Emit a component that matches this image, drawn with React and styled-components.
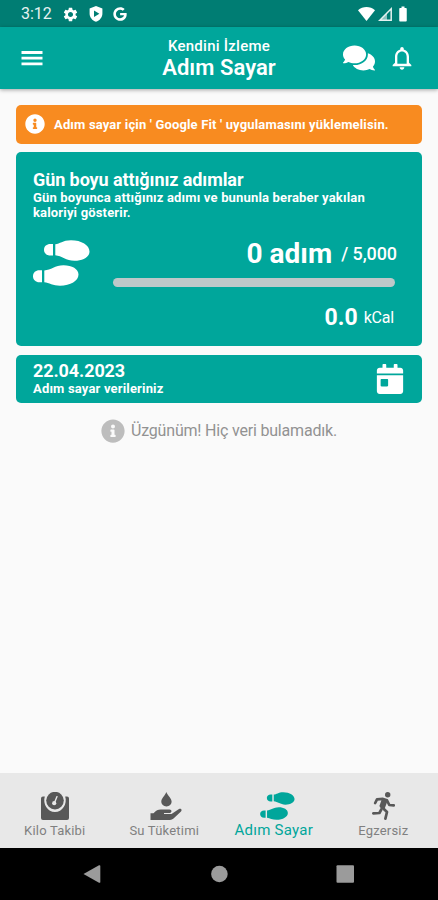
import React from 'react';
import styled, { createGlobalStyle } from 'styled-components';
import { FaCalendarDay, FaComments, FaGoogle, FaInfoCircle } from 'react-icons/fa';
import { MdBatteryFull, MdNotificationsNone, MdSettings } from 'react-icons/md';

const teal = '#00a69b';
const darkTeal = '#007d73';

const GlobalStyle = createGlobalStyle`
  body {
    margin: 0;
    background: #fafafa;
    font-family: Roboto, 'Noto Sans', sans-serif;
  }

  svg {
    display: block;
    flex: none;
  }
`;

const Screen = styled.div`
  display: flex;
  flex-direction: column;
  height: 900px;
  overflow: hidden;
`;

const Text = styled.div`
  font-size: ${p => p.$size}px;
  font-weight: ${p => p.$weight || 400};
  line-height: ${p => p.$line || p.$size}px;
  letter-spacing: ${p => p.$track || 0}px;
  white-space: nowrap;
`;

const StatusBar = styled.div`
  display: flex;
  flex: none;
  justify-content: space-between;
  align-items: center;
  box-sizing: border-box;
  height: 27px;
  padding: 1px 26px 0 21px;
  background: ${darkTeal};
  color: #fff;
`;

const StatusGroup = styled.div`
  display: flex;
  align-items: center;
  gap: ${p => p.$gap}px;
`;

const Clock = styled(Text)`
  width: 31px;
  opacity: 0.9;
`;

const Header = styled.div`
  display: grid;
  flex: none;
  grid-template-columns: 76px 1fr 76px;
  align-items: center;
  box-sizing: border-box;
  height: 62px;
  padding: 0 18px;
  background: ${teal};
  color: #fff;
  box-shadow: 0 1px 4px rgba(0, 0, 0, 0.35);
`;

const Titles = styled.div`
  display: flex;
  flex-direction: column;
  align-items: center;
  padding-top: 2px;
`;

const HeaderActions = styled.div`
  display: flex;
  justify-content: flex-end;
  align-items: center;
  gap: 13px;
  padding-right: 4px;
`;

const Content = styled.div`
  display: flex;
  flex: 1;
  flex-direction: column;
  padding: 16px 16px 0;
`;

const Banner = styled.div`
  display: flex;
  align-items: center;
  box-sizing: border-box;
  height: 38.5px;
  gap: 9px;
  padding-left: 9px;
  border-radius: 5px;
  background: #f88b20;
  color: #fff;
`;

const Card = styled.div`
  box-sizing: border-box;
  border-radius: 5px;
  background: ${teal};
  color: #fff;
`;

const StepsCard = styled(Card)`
  height: 194px;
  margin-top: 8px;
  padding: 18px 17px 0;
`;

const Progress = styled.div`
  display: flex;
  justify-content: space-between;
  margin-top: 16px;

  > svg {
    margin-top: 3px;
  }
`;

const Stats = styled.div`
  display: flex;
  flex-direction: column;
  align-items: flex-end;
  width: 282px;
  margin-right: 10px;
`;

const StatLine = styled.div`
  display: flex;
  align-items: center;
  gap: ${p => p.$gap}px;
  margin-right: ${p => p.$shift || 0}px;
`;

const Track = styled.div`
  width: 100%;
  height: 9px;
  margin: 7px 0 17px;
  border-radius: 5px;
  background: #bec8c9;
`;

const DateCard = styled(Card)`
  display: flex;
  justify-content: space-between;
  align-items: center;
  height: 48px;
  margin-top: 9px;
  padding: 0 17px;
`;

const Empty = styled.div`
  display: flex;
  justify-content: center;
  align-items: center;
  gap: 6px;
  margin-top: 16px;
  color: #929292;

  svg {
    color: #bdbdbd;
  }
`;

const TabBar = styled.div`
  display: grid;
  flex: none;
  grid-template-columns: repeat(4, 1fr);
  height: 75px;
  background: #e8e8e8;
`;

const Tab = styled.div`
  display: flex;
  flex-direction: column;
  align-items: center;
  padding-top: 19px;
  color: ${p => (p.$active ? teal : '#808080')};

  svg {
    height: 28px;
    margin-left: ${p => (p.$active ? 7 : 0)}px;
    color: ${p => (p.$active ? teal : '#585858')};
  }
`;

const SystemBar = styled.div`
  display: flex;
  flex: none;
  justify-content: center;
  height: 52px;
  background: #000;
`;

const MenuIcon = () => (
  <svg width="28" height="28" viewBox="0 0 28 28" stroke="#fff" strokeWidth="2.8">
    <path d="M3.5 8.5H24.5M3.5 14.2H24.5M3.5 19.9H24.5" />
  </svg>
);

const ShieldIcon = () => (
  <svg width="14" height="16" viewBox="0 0 14 16">
    <path
      fill="#fff"
      fillRule="evenodd"
      d="M7 0 13.4 2.4V7.5C13.4 11.3 10.7 14.6 7 15.8 3.3 14.6.6 11.3.6 7.5V2.4ZM5 4.5V11L10.4 7.7Z"
    />
  </svg>
);

const WifiIcon = () => (
  <svg width="17" height="14" viewBox="0 0 17 14">
    <path fill="#fff" d="M0 3.2C4.8-1 12.2-1 17 3.2L8.5 14Z" />
  </svg>
);

const SignalIcon = () => (
  <svg width="14" height="14" viewBox="0 0 14 14">
    <path fill="none" stroke="#e6f2f1" strokeWidth="1.5" d="M1.8 13.2 13.2 1.8V13.2Z" />
    <path fill="#e6f2f1" d="M2 13 9 6V13Z" opacity=".6" />
  </svg>
);

const FootprintsIcon = ({ width = 57, height = 46 }) => (
  <svg width={width} height={height} viewBox="0 0 57 46" fill="currentColor">
    <path d="M20 4V15.5H17.3C13.7 15.5 11 13.2 11 9.7S13.7 4 17.3 4Z" />
    <path d="M22.3 4.2C27 4 29.5.3 38 .3 48.5.3 56.5 5.2 56.5 11.5 56.5 17 50 20.8 41.5 20.8 33 20.8 29 15.8 22.3 15.3Z" />
    <path d="M9 30.3V42.2H6.3C2.7 42.2 0 39.8 0 36.2S2.7 30.3 6.3 30.3Z" />
    <path d="M11.3 30.4C18 30 22 25.2 30.5 25.2 39 25.2 45.5 29 45.5 34.5 45.5 40.8 37.5 45.7 27 45.7 20 45.7 16 42.6 11.3 42.2Z" />
  </svg>
);

const ScaleIcon = () => (
  <svg width="28" height="28" viewBox="0 0 28 28">
    <path
      fill="currentColor"
      d="M2 4.5H3.8C1.5 12 6.5 20 14 20S26.5 12 24.2 4.5H26Q28 4.5 28 6.5V26Q28 28 26 28H2Q0 28 0 26V6.5Q0 4.5 2 4.5Z"
    />
    <circle cx="14" cy="8.6" r="8.8" fill="currentColor" />
    <path d="M16 4.6 13.4 11" stroke="#e8e8e8" strokeWidth="1.4" strokeLinecap="round" />
    <circle cx="13.2" cy="11.2" r="2.1" fill="#e8e8e8" />
  </svg>
);

const WaterIcon = () => (
  <svg width="36" height="28" viewBox="0 0 36 28" fill="currentColor">
    <path d="M20.3 0C22 4 25.6 6.4 25.6 9.6 25.6 12.5 23.4 14.4 20.5 14.4S15.3 12.5 15.3 9.6C15.3 6.4 18.8 4 20.3 0Z" />
    <path d="M4.5 21.3H7.5C10 18.3 12 17.5 14.7 17.5H23.5C25.9 17.5 26.2 20.5 23.8 21H18V22H25.5L33 17.1C35 15.9 36.4 17.9 35 19.4L27.5 26.6Q26.1 27.9 24 27.9H4.5Z" />
  </svg>
);

const RunnerIcon = () => (
  <svg width="24" height="28" viewBox="0 0 24 28">
    <circle cx="16.7" cy="2.8" r="2.7" fill="currentColor" />
    <g fill="none" stroke="currentColor" strokeWidth="2.7" strokeLinecap="round" strokeLinejoin="round">
      <path d="M4.2 11 6 7.4 12 6.9 16 8.3 18.3 13 22.8 13.4" />
      <path d="M11.8 16 16 20 14.4 26.6" />
      <path d="M10.3 17.5 8.4 21 2.3 21.3" />
    </g>
    <path fill="currentColor" d="M10.7 7.5 16.7 8.5 13.7 16.5 10 16.8 8.4 14Z" />
  </svg>
);

const SystemButtons = () => (
  <svg width="438" height="52" viewBox="0 0 438 52" fill="#9b9b9b">
    <path d="M83.5 26 99 17.3Q100.3 16.8 100.3 18V34Q100.3 35.2 99 34.7Z" />
    <circle cx="219.4" cy="26" r="8.3" />
    <rect x="336.5" y="17.3" width="17.5" height="17.5" rx="1" />
  </svg>
);

const tabs = [
  { label: 'Kilo Takibi', icon: <ScaleIcon /> },
  { label: 'Su Tüketimi', icon: <WaterIcon /> },
  { label: 'Adım Sayar', icon: <FootprintsIcon width={35} height={28} />, active: true },
  { label: 'Egzersiz', icon: <RunnerIcon /> },
];

const App = () => (
  <>
    <GlobalStyle />
    <Screen>
      <StatusBar>
        <StatusGroup $gap={10}>
          <Clock $size={16} $line={18}>3:12</Clock>
          <MdSettings size={17} />
          <ShieldIcon />
          <FaGoogle size={14} />
        </StatusGroup>
        <StatusGroup $gap={2.5}>
          <WifiIcon />
          <SignalIcon />
          <MdBatteryFull size={18} />
        </StatusGroup>
      </StatusBar>

      <Header>
        <MenuIcon />
        <Titles>
          <Text $size={15} $line={18} $weight={500} $track={0.25}>Kendini İzleme</Text>
          <Text $size={22} $line={26} $weight={600} $track={0.05}>Adım Sayar</Text>
        </Titles>
        <HeaderActions>
          <FaComments size={32} />
          <MdNotificationsNone size={28} />
        </HeaderActions>
      </Header>

      <Content>
        <Banner>
          <FaInfoCircle size={20} />
          <Text $size={13} $weight={700} $track={0.16}>
            Adım sayar için ' Google Fit ' uygulamasını yüklemelisin.
          </Text>
        </Banner>

        <StepsCard>
          <Text $size={18} $line={20} $weight={700} $track={-0.08}>Gün boyu attığınız adımlar</Text>
          <Text $size={13} $line={15.5} $weight={700} $track={0.17}>
            Gün boyunca attığınız adımı ve bununla beraber yakılan
            <br />
            kaloriyi gösterir.
          </Text>
          <Progress>
            <FootprintsIcon />
            <Stats>
              <StatLine $gap={9} $shift={-2}>
                <Text $size={28} $line={34} $weight={700}>0 adım</Text>
                <Text $size={18} $weight={500} $track={-0.1}>/ 5,000</Text>
              </StatLine>
              <Track />
              <StatLine $gap={6} $shift={1}>
                <Text $size={23} $line={28} $weight={700}>0.0</Text>
                <Text $size={16} $track={-0.2}>kCal</Text>
              </StatLine>
            </Stats>
          </Progress>
        </StepsCard>

        <DateCard>
          <div>
            <Text $size={18} $line={20} $weight={700} $track={-0.1}>22.04.2023</Text>
            <Text $size={13} $line={16} $weight={700} $track={0.17}>Adım sayar verileriniz</Text>
          </div>
          <FaCalendarDay size={30} />
        </DateCard>

        <Empty>
          <FaInfoCircle size={24} />
          <Text $size={16} $track={-0.19}>Üzgünüm! Hiç veri bulamadık.</Text>
        </Empty>
      </Content>

      <TabBar>
        {tabs.map(({ label, icon, active }) => (
          <Tab key={label} $active={active}>
            {icon}
            <Text $size={active ? 15 : 13} $line={active ? 20 : 22} $track={active ? 0.25 : 0.2}>
              {label}
            </Text>
          </Tab>
        ))}
      </TabBar>

      <SystemBar>
        <SystemButtons />
      </SystemBar>
    </Screen>
  </>
);

export default App;
